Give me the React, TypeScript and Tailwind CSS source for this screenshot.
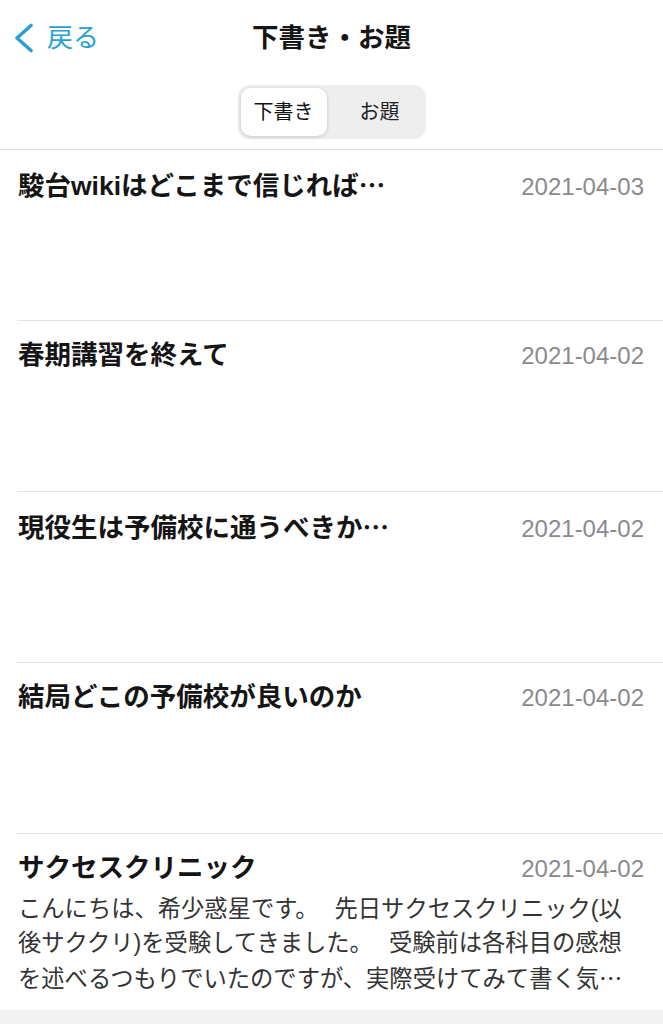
import React from "react";

type Item = { title: string; date: string; ellipsis?: boolean };

const items: Item[] = [
  { title: "駿台wikiはどこまで信じれば", date: "2021-04-03", ellipsis: true },
  { title: "春期講習を終えて", date: "2021-04-02" },
  { title: "現役生は予備校に通うべきか", date: "2021-04-02", ellipsis: true },
  { title: "結局どこの予備校が良いのか", date: "2021-04-02" },
];

function Ellipsis() {
  return <span className="font-['Noto_Sans_CJK_JP',sans-serif]">…</span>;
}

function Row({ item, first }: { item: Item; first?: boolean }) {
  return (
    <div
      className={
        first
          ? "ml-[17px] h-[170px] pl-[1px] pr-[19px] pt-[17px]"
          : "ml-[17px] h-[171px] border-t border-[#e3e3e3] pl-[1px] pr-[19px] pt-[17px]"
      }
    >
      <div className="flex items-baseline justify-between">
        <div className="text-[26.5px] leading-[34px] font-bold text-[#151515] whitespace-nowrap">
          {item.title}
          {item.ellipsis ? <Ellipsis /> : null}
        </div>
        <div className="text-[24px] leading-[34px] text-[#8a8a8e] font-['Liberation_Sans',sans-serif]">
          {item.date}
        </div>
      </div>
    </div>
  );
}

export default function App() {
  return (
    <div className="min-h-screen bg-[#f2f2f2] font-['Liberation_Sans','Noto_Sans_CJK_JP',sans-serif]">
      <div className="bg-white">
        {/* Nav bar */}
        <div className="grid h-[76px] grid-cols-[1fr_auto_1fr] items-center">
          <div className="flex items-center gap-[13px] pl-[14px]">
            <svg width="20" height="30" viewBox="0 0 20 30" fill="none">
              <polyline
                points="17,2.5 3,15 17,27.5"
                stroke="#2a9fd2"
                strokeWidth="3.6"
                strokeLinecap="round"
                strokeLinejoin="round"
              />
            </svg>
            <span className="text-[26px] leading-none text-[#2a9fd2]">戻る</span>
          </div>
          <div className="text-[26.5px] font-bold leading-none text-[#151515]">下書き・お題</div>
          <div />
        </div>

        {/* Segmented control */}
        <div className="flex justify-center border-b border-[#dcdcdc] pt-[9px] pb-[10px]">
          <div className="flex h-[54px] w-[188px] rounded-[12px] bg-[#eeeeef] p-[3px]">
            <div className="flex w-[86px] items-center justify-center rounded-[10px] bg-white text-[20px] text-[#111] shadow-[0_1px_4px_rgba(0,0,0,0.16)]">
              下書き
            </div>
            <div className="flex flex-1 items-center justify-center pl-[10px] text-[20px] text-[#222]">
              お題
            </div>
          </div>
        </div>

        {/* List */}
        {items.map((it, i) => (
          <Row key={i} item={it} first={i === 0} />
        ))}

        <div className="ml-[17px] border-t border-[#e3e3e3] pl-[1px] pr-[19px] pt-[17px] pb-[14px]">
          <div className="flex items-baseline justify-between">
            <div className="text-[26.5px] leading-[34px] font-bold text-[#151515] whitespace-nowrap">
              サクセスクリニック
            </div>
            <div className="text-[24px] leading-[34px] text-[#8a8a8e] font-['Liberation_Sans',sans-serif]">
              2021-04-02
            </div>
          </div>
          <div className="mt-[6px] text-[23.3px] leading-[34px] text-[#333] whitespace-nowrap">
            <div>
              こんにちは、希少惑星です。<span className="inline-block w-[16px]"> </span>先日サクセスクリニック(以
            </div>
            <div>
              後サククリ)を受験してきました。<span className="inline-block w-[16px]"> </span>受験前は各科目の感想
            </div>
            <div>
              を述べるつもりでいたのですが、実際受けてみて書く気<Ellipsis />
            </div>
          </div>
        </div>
      </div>
    </div>
  );
}
